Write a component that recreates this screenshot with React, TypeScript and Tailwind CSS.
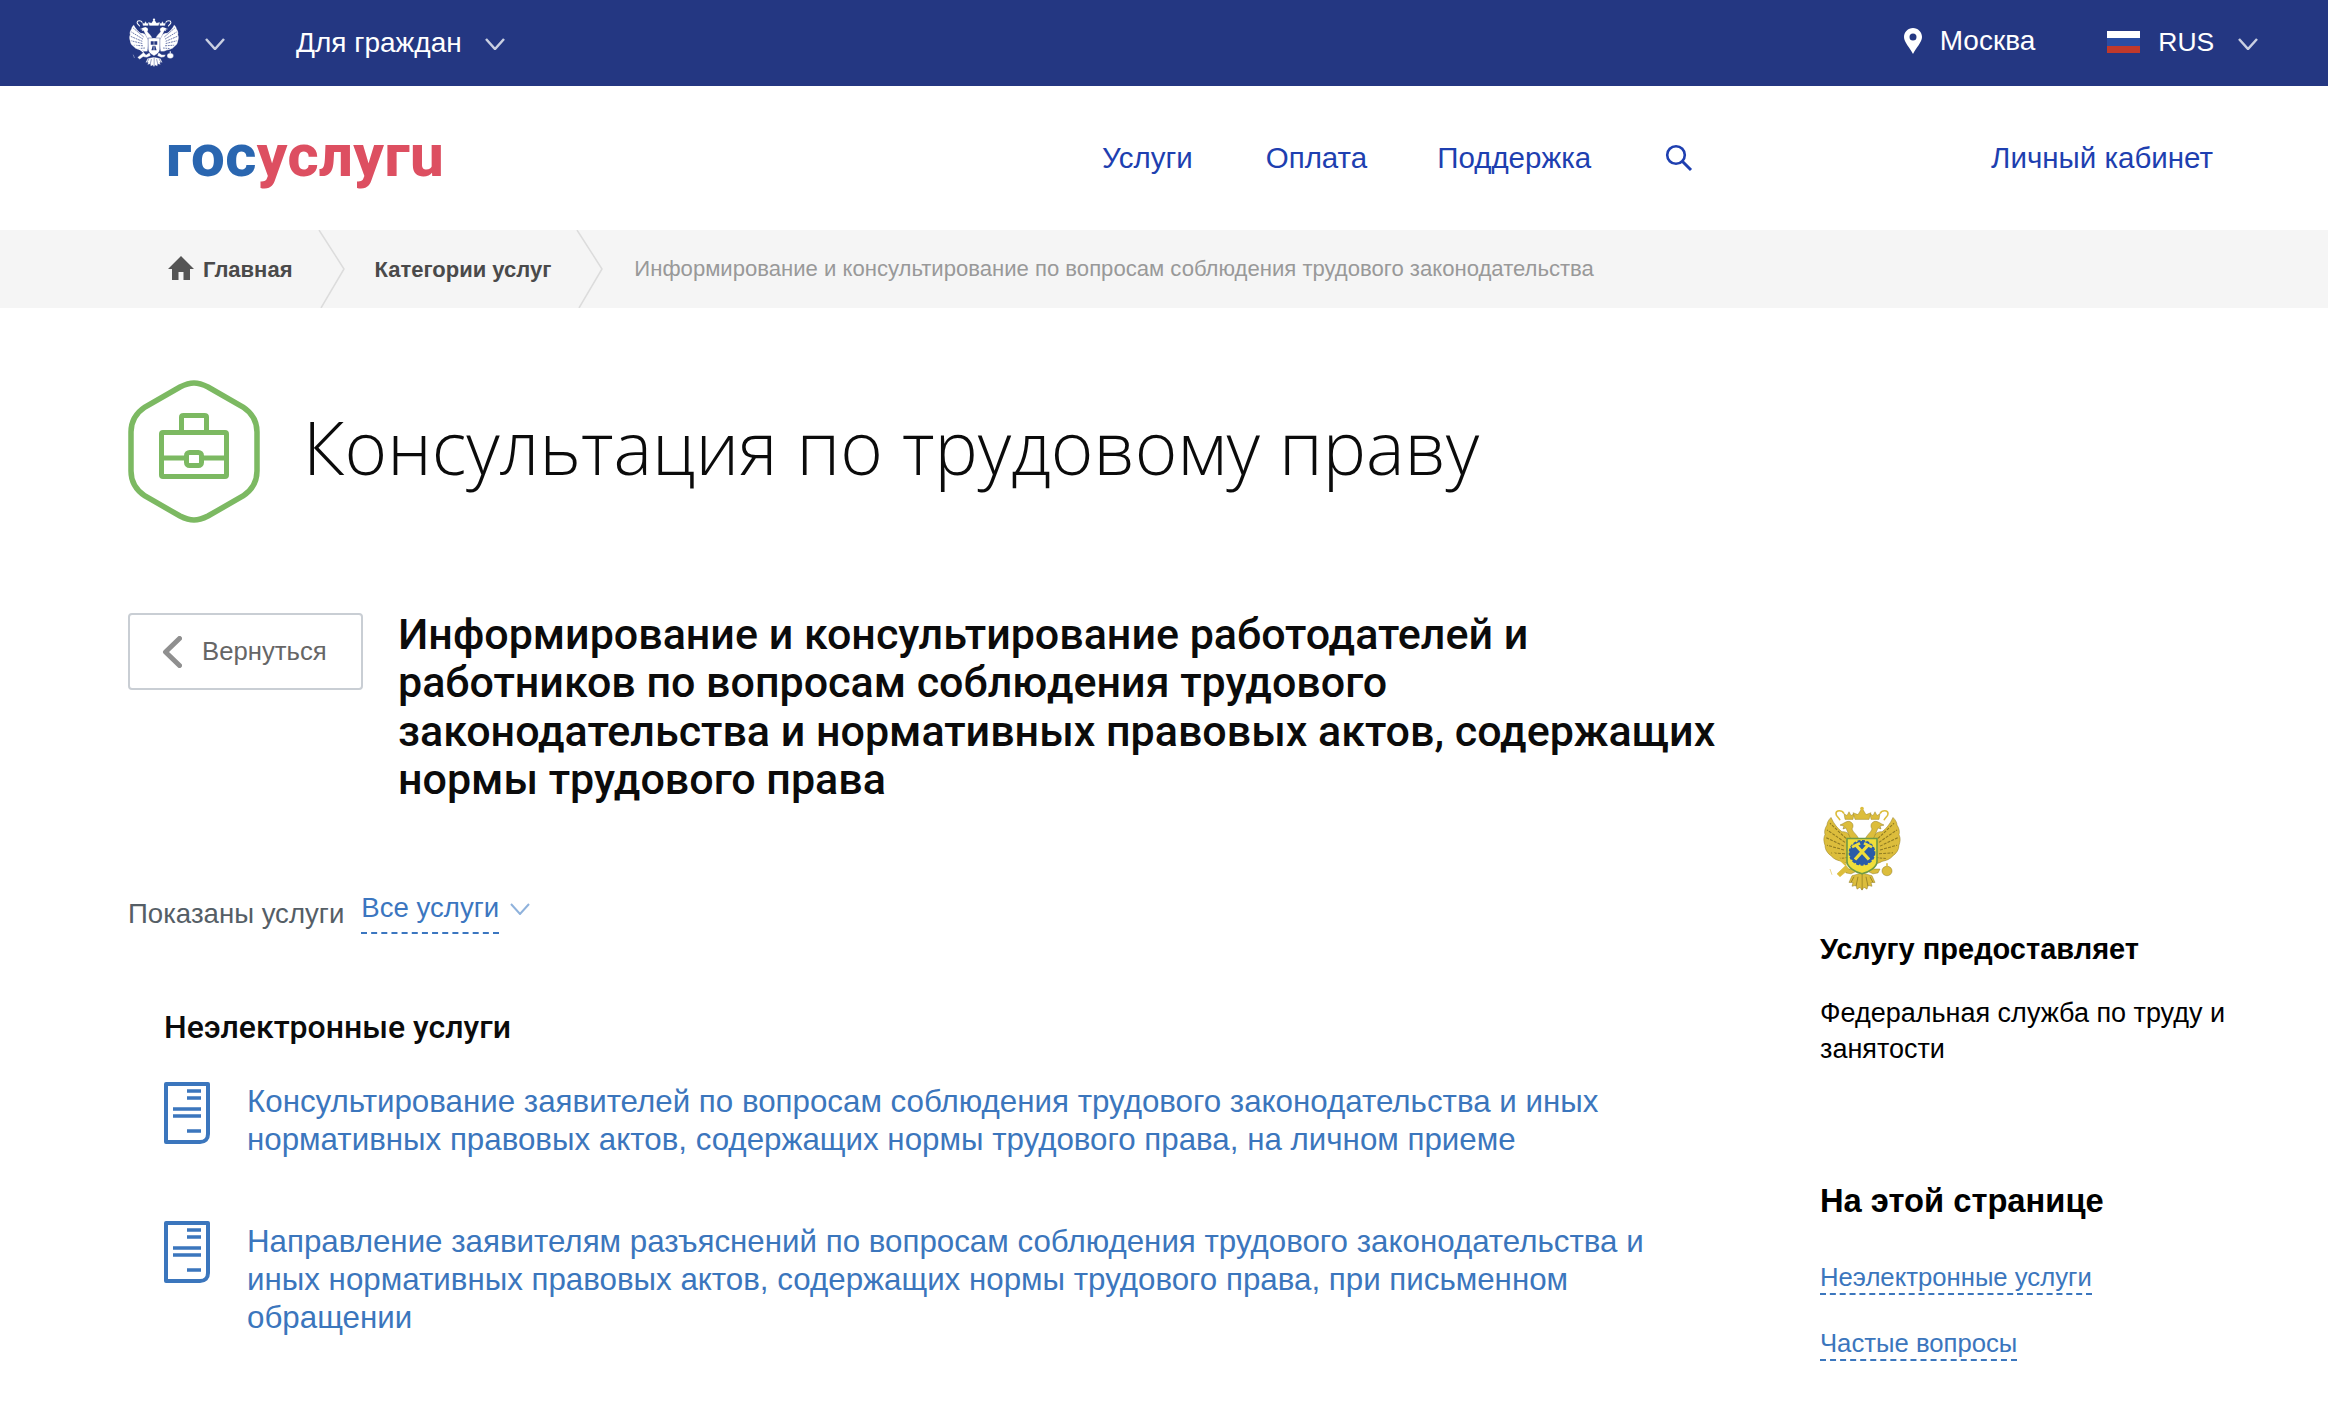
import React from "react";

const Chevron = ({ className = "", color = "#c9cfe2", w = 20, h = 12, sw = 2.5 }: { className?: string; color?: string; w?: number; h?: number; sw?: number }) => (
  <svg className={className} width={w} height={h} viewBox={`0 0 ${w} ${h}`} fill="none">
    <polyline points={`1,1 ${w / 2},${h - 1} ${w - 1},1`} stroke={color} strokeWidth={sw} />
  </svg>
);

const Eagle = ({ fg, line, gold, className }: { fg: string; line: string; gold?: boolean; className?: string }) => {
  const half = (
    <g>
      <path d="M47 41 C50 30 56 26 60 27 C64 24 68 19 71 12 C74 15 75 18 75 20 C77 23 78 27 77 30 C79 34 78 38 77 41 C77 46 74 50 71 52 C68 56 64 57 60 58 C57 60 53 61 50 60 Z" fill={fg} stroke={line} strokeWidth="0.5" />
      <g stroke={line} strokeWidth="1.1" fill="none">
        <path d="M56 34 L72 18" strokeDasharray="3 1.2" />
        <path d="M57 38 L75 25" strokeDasharray="3 1.2" />
        <path d="M58 42 L76 33" strokeDasharray="3 1.2" />
        <path d="M58 46 L75 41" strokeDasharray="3 1.2" />
        <path d="M57 50 L71 49" strokeDasharray="3 1.2" />
        <path d="M54 54 L64 55" strokeDasharray="2.5 1.2" />
      </g>
      <path d="M42 38 C44 30 49 28 50 24 C48 21 49 17 53 16 C56 16 58 18 62 20 L58 21 L59 24 L56 23 C54 28 52 34 47 42 Z" fill={fg} stroke={line} strokeWidth="0.5" />
      <path d="M49 14 L48 8 L51 10 L53 6 L55 10 L58 8 L57 14 Z" fill={fg} stroke={line} strokeWidth="0.4" />
      <path d="M58 8 C60 4 66 4 66 8 C66 11 63 12 62 15" fill="none" stroke={fg} strokeWidth="1.6" />
      <path d="M47 62 L52 66 L58 66 L56 70 L51 71 L45 68 Z" fill={fg} stroke={line} strokeWidth="0.5" />
      <path d="M40 70 L50 73 L53 80 L49 80 L50 84 L46 83 L45 87 L42 85 L40 88 Z" fill={fg} stroke={line} strokeWidth="0.5" />
      <path d="M44 74 L46 84 M48 74 L51 80" stroke={line} strokeWidth="0.8" />
    </g>
  );
  return (
    <svg className={className} viewBox="0 0 80 90" fill="none" preserveAspectRatio="none">
      {half}
      <g transform="translate(80,0) scale(-1,1)">{half}</g>
      <path d="M33 14 L31 7 L36 9 L40 2 L44 9 L49 7 L47 14 Z" fill={fg} stroke={line} strokeWidth="0.4" />
      <circle cx="40" cy="2.5" r="1.8" fill={fg} />
      <path d="M24 62 L10 48" stroke={fg} strokeWidth="2" />
      <path d="M10 72 L8 66 M24 62 L15 71 L18 74 L27 66 Z" fill={fg} stroke={fg} strokeWidth="0.6" />
      <circle cx="65" cy="68" r="5" fill={fg} stroke={line} strokeWidth="0.5" />
      <path d="M65 60 L65 63" stroke={fg} strokeWidth="1.6" />
      {gold ? (
        <g>
          <path d="M25 34 H55 V58 C55 64 47 69 40 71 C33 69 25 64 25 58 Z" fill="#f0de3a" stroke="#6f9a45" strokeWidth="1.6" />
          <circle cx="40" cy="49" r="12.5" fill="#2b5ca8" stroke="#2b5ca8" strokeWidth="1.8" strokeDasharray="3 1.5" />
          <path d="M34 41 L47 56 M46 41 L33 56" stroke="#f0de3a" strokeWidth="3.2" />
          <path d="M30 43 L38 39 M50 43 L42 39" stroke="#f0de3a" strokeWidth="2.8" />
        </g>
      ) : (
        <g>
          <path d="M31 36 H49 V56 C49 62 44 66 40 68 C36 66 31 62 31 56 Z" fill={fg} stroke={line} strokeWidth="0.7" />
          <path d="M35 42 H45 V48 H35 Z M38 50 L42 50 L44 58 L36 58 Z" fill={line} />
          <path d="M40 36 V68" stroke={fg} strokeWidth="1" />
        </g>
      )}
    </svg>
  );
};

const DocIcon = ({ className = "" }: { className?: string }) => (
  <svg width="46" height="62" viewBox="0 0 46 62" fill="none" className={`shrink-0 ${className}`} stroke="#3b76bd">
    <path d="M2 2 H44 V52 C44 57 41 60 36 60 H2 Z" strokeWidth="4" strokeLinejoin="round" />
    <path d="M23 9 H37 M23 16 H37 M9 27 H37 M9 34 H37 M23 49 H37" strokeWidth="3.6" />
  </svg>
);

const Crumb = ({ className = "" }: { className?: string }) => (
  <svg width="28" height="78" viewBox="0 0 28 78" fill="none" className={`shrink-0 ${className}`}>
    <polyline points="1,0 26,39 3,78" stroke="#dcdcdc" strokeWidth="1.5" />
  </svg>
);

export default function App() {
  return (
    <div className="h-[1412px] w-[2328px] overflow-hidden bg-white font-['Liberation_Sans',sans-serif]">
      {/* top bar */}
      <div className="flex h-[86px] items-center bg-[#243782] pl-[128px] text-[28px] text-white">
        <Eagle fg="#ffffff" line="#243782" className="h-[50px] w-[52px]" />
        <Chevron className="ml-[25px] mt-[1px]" />
        <span className="ml-[71px]">Для граждан</span>
        <Chevron className="ml-[23px] mt-[1px]" />
        <svg width="18" height="26" viewBox="0 0 18 26" className="ml-[1399px] -mt-[4px]">
          <path d="M9 0 C14 0 18 4 18 9 C18 14 12 20 9 26 C6 20 0 14 0 9 C0 4 4 0 9 0 Z M9 5.5 A3.5 3.5 0 1 0 9 12.5 A3.5 3.5 0 1 0 9 5.5 Z" fill="#ffffff" fillRule="evenodd" />
        </svg>
        <span className="ml-[18px] -mt-[4px]">Москва</span>
        <div className="ml-[72px] -mt-[2px] flex h-[22px] w-[33px] flex-col">
          <div className="h-[7px] bg-white" />
          <div className="h-[8px] bg-[#2a4da3]" />
          <div className="h-[7px] bg-[#c0392b]" />
        </div>
        <span className="ml-[18px] text-[26.5px]">RUS</span>
        <Chevron className="ml-[24px] mt-[2px]" />
      </div>

      {/* header */}
      <div className="flex h-[144px] items-center pl-[168px] text-[29.5px] text-[#1e3fb0]">
        <div className="-ml-[2px] w-[277px] -mt-[4px] font-['Roboto',sans-serif] text-[60px] font-extrabold leading-none tracking-[0.4px]">
          <span className="text-[#2a66b0]">гос</span>
          <span className="text-[#dd4f61]">услугu</span>
        </div>
        <span className="ml-[659px]">Услуги</span>
        <span className="ml-[73px]">Оплата</span>
        <span className="ml-[70px]">Поддержка</span>
        <svg width="28" height="28" viewBox="0 0 28 28" fill="none" stroke="#1e3fb0" className="ml-[74px]">
          <circle cx="11" cy="11" r="8.8" strokeWidth="2.6" />
          <path d="M17.5 17.5 L26 26" strokeWidth="3" />
        </svg>
        <span className="ml-[298px]">Личный кабинет</span>
      </div>

      {/* breadcrumbs */}
      <div className="flex h-[78px] items-center bg-[#f5f5f5] pl-[168px] text-[22px]">
        <svg width="26" height="24" viewBox="0 0 26 24" fill="#555555" className="-mt-[2px]">
          <path d="M13 0 L26 13 H22 V24 H15.5 V16 H10.5 V24 H4 V13 H0 Z" />
        </svg>
        <span className="ml-[9px] mt-[1px] font-bold text-[#4a4a4a]">Главная</span>
        <Crumb className="ml-[26px]" />
        <span className="ml-[28px] mt-[1px] font-bold text-[#4a4a4a]">Категории услуг</span>
        <Crumb className="ml-[25px]" />
        <span className="ml-[30px] text-[22.1px] text-[#999999]">Информирование и консультирование по вопросам соблюдения трудового законодательства</span>
      </div>

      {/* title */}
      <div className="mt-[72px] flex items-center pl-[128px]">
        <svg width="132" height="143" viewBox="0 0 132 143" fill="none" stroke="#7cb962" className="shrink-0">
          <path d="M66 3 C60 3 56 5 52 7 L17 27 C8 33 3 42 3 52 L3 91 C3 101 8 110 17 116 L52 136 C56 138 60 140 66 140 C72 140 76 138 80 136 L115 116 C124 110 129 101 129 91 L129 52 C129 42 124 33 115 27 L80 7 C76 5 72 3 66 3 Z" strokeWidth="5.5" />
          <rect x="33.5" y="52.5" width="65" height="44" rx="1.5" strokeWidth="5" strokeLinejoin="round" />
          <path d="M53.5 50 V37 C53.5 36 54.5 35.5 55.5 35.5 H76.5 C77.5 35.5 78.5 36 78.5 37 V50" strokeWidth="5" />
          <path d="M33 78 H56 M76 78 H99" strokeWidth="5" />
          <rect x="58.5" y="72.5" width="15" height="13" rx="3" strokeWidth="5" />
        </svg>
        <h1 className="ml-[43px] -mt-[8px] font-['Open_Sans',sans-serif] text-[72.8px] font-light leading-none text-[#0b0b0b]">Консультация по трудовому праву</h1>
      </div>

      {/* content */}
      <div className="mt-[90px] flex pl-[128px]">
        <div className="w-[1560px] shrink-0">
          <div className="flex items-start">
            <button className="flex h-[77px] w-[235px] shrink-0 items-center rounded-[4px] border-2 border-[#c9ced4] pl-[32px] text-[25.7px] text-[#666666]">
              <svg width="20" height="32" viewBox="0 0 20 32" fill="none" stroke="#8f8f8f">
                <polyline points="17.5,2.5 3.5,16 17.5,29.5" strokeWidth="5" strokeLinecap="round" strokeLinejoin="round" />
              </svg>
              <span className="ml-[20px]">Вернуться</span>
            </button>
            <h2 className="ml-[35px] -mt-[3px] h-[194px] w-[1325px] shrink-0 font-['Roboto',sans-serif] text-[43px] font-medium leading-[48.3px] text-[#0b0b0b]">
              Информирование и консультирование работодателей и работников по вопросам соблюдения трудового законодательства и нормативных правовых актов, содержащих нормы трудового права
            </h2>
          </div>

          <div className="mt-[85px] flex items-start text-[27.6px] leading-[42px]">
            <span className="mt-[4px] text-[#555e66]">Показаны услуги</span>
            <span className="ml-[17px] -mt-[2px] border-b-2 border-dashed border-[#3b76c0] pb-[3px] text-[#3b76c0]">Все услуги</span>
            <Chevron className="ml-[11px] mt-[14px]" color="#8fb2dc" w={20} h={12} sw={2} />
          </div>

          <div className="ml-[36px] mt-[71px]">
            <h3 className="font-['Roboto',sans-serif] text-[32px] font-medium leading-[42px] text-[#0b0b0b]">Неэлектронные услуги</h3>
            <div className="mt-[34px] flex">
              <DocIcon />
              <a className="ml-[37px] mt-[1px] block text-[31.3px] leading-[38px] text-[#3b76bd]">
                Консультирование заявителей по вопросам соблюдения трудового законодательства и иных нормативных правовых актов, содержащих нормы трудового права, на личном приеме
              </a>
            </div>
            <div className="mt-[64px] flex">
              <DocIcon className="-mt-[2px]" />
              <a className="ml-[37px] block w-[1400px] text-[31.3px] leading-[38px] text-[#3b76bd]">
                Направление заявителям разъяснений по вопросам соблюдения трудового законодательства и иных нормативных правовых актов, содержащих нормы трудового права, при письменном обращении
              </a>
            </div>
          </div>
        </div>

        <div className="ml-[132px] mt-[193px] flex-1 text-black">
          <Eagle fg="#dcbd3c" line="#8e7a22" gold className="ml-[2px] h-[86px] w-[80px]" />
          <div className="mt-[40px] text-[29px] font-bold leading-[34px]">Услугу предоставляет</div>
          <div className="mt-[29px] w-[440px] text-[27px] leading-[36px]">Федеральная служба по труду и занятости</div>
          <div className="mt-[114px] text-[32.7px] font-bold leading-[40px]">На этой странице</div>
          <div className="mt-[40px] flex flex-col items-start gap-[32px] text-[25.7px] leading-[32px] text-[#3b76bd]">
            <span className="border-b-2 border-dashed border-[#3b76bd]">Неэлектронные услуги</span>
            <span className="border-b-2 border-dashed border-[#3b76bd]">Частые вопросы</span>
          </div>
        </div>
      </div>
    </div>
  );
}
